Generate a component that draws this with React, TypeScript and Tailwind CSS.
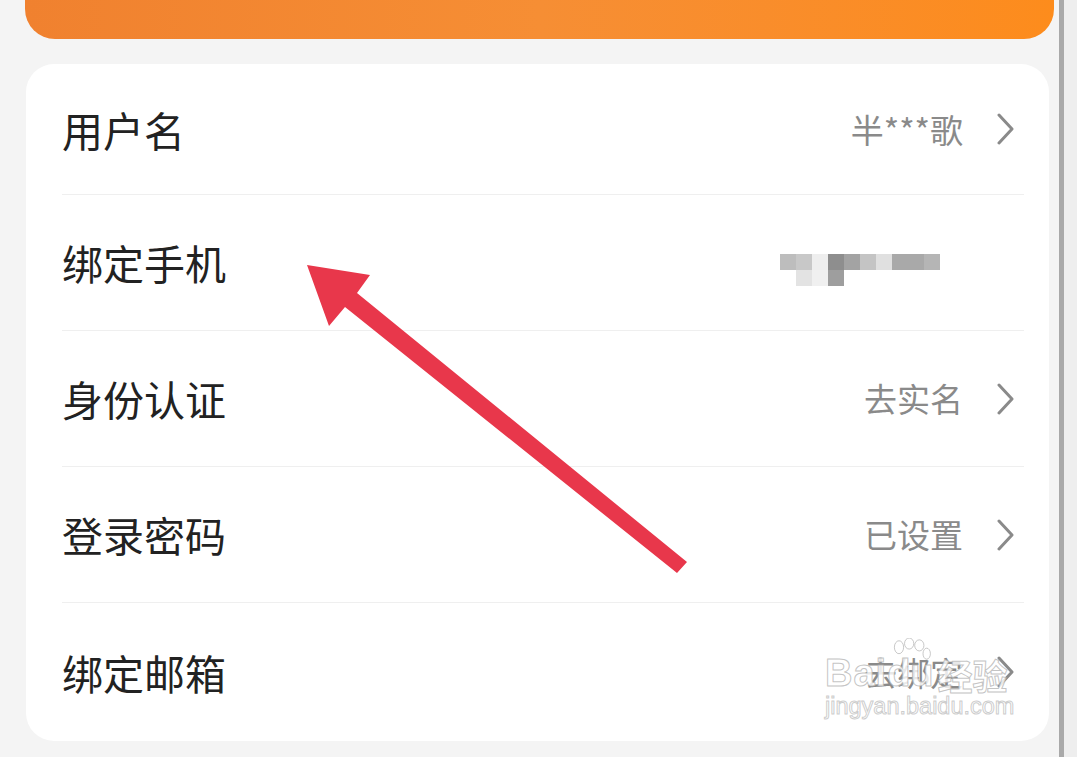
import React from 'react';

const font = { fontFamily: '"Noto Sans CJK SC", "Noto Sans", sans-serif' };

const rows = [
  { label: '用户名', value: '半***歌', h: 'h-[131px]' },
  { label: '绑定手机', value: null, h: 'h-[136px]' },
  { label: '身份认证', value: '去实名', h: 'h-[136px]' },
  { label: '登录密码', value: '已设置', h: 'h-[136px]' },
  { label: '绑定邮箱', value: '去绑定', h: 'h-[138px]' },
];

// mosaic blocks covering the phone number
const mosaic = [
  ['#bdbdbd', '#c8c8c8', '#eeeeee', '#8e8e8e', '#a3a3a3', '#c4c4c4', '#e0e0e0', '#a9a9a9', '#a9a9a9', '#b5b5b5'],
  ['#ffffff', '#e3e3e3', '#f0f0f0', '#9e9e9e', '#ffffff', '#ffffff', '#ffffff', '#ffffff', '#ffffff', '#ffffff'],
];

function Chevron() {
  return (
    <svg width="18" height="32" viewBox="0 0 18 32" className="shrink-0">
      <polyline points="2,2 15,16 2,30" fill="none" stroke="#8a8a8a" strokeWidth="3" strokeLinecap="round" strokeLinejoin="round" />
    </svg>
  );
}

function PhoneMosaic() {
  return (
    <div className="mr-[84px] mt-[14px] flex flex-col">
      {mosaic.map((line, i) => (
        <div key={i} className="flex">
          {line.map((c, j) => (
            <div key={j} className="h-4 w-4" style={{ backgroundColor: c }} />
          ))}
        </div>
      ))}
    </div>
  );
}

function Watermark() {
  return (
    <div className="pointer-events-none absolute left-[825px] top-[654px] flex flex-col items-start" style={{ fontFamily: '"Liberation Sans", "Noto Sans CJK SC", sans-serif' }}>
      <div className="relative flex items-end leading-none">
        <span className="text-[38px] font-bold tracking-[1px] text-white/80 [-webkit-text-stroke:1px_rgba(170,170,170,0.7)]">Bai</span>
        <span className="relative">
          <svg width="48" height="48" viewBox="0 0 52 52" className="absolute -top-[16px] left-0">
            <g fill="rgba(255,255,255,0.8)" stroke="rgba(170,170,170,0.7)" strokeWidth="1">
              <ellipse cx="13" cy="10" rx="5" ry="7" />
              <ellipse cx="24" cy="6" rx="5" ry="6" />
              <ellipse cx="35" cy="8" rx="5" ry="6" />
              <ellipse cx="43" cy="17" rx="4" ry="6" />
            </g>
          </svg>
          <span className="relative text-[38px] font-bold text-white/80 [-webkit-text-stroke:1px_rgba(170,170,170,0.7)]">du</span>
        </span>
        <span className="ml-[4px] text-[35px] font-bold text-white/80 [-webkit-text-stroke:1px_rgba(170,170,170,0.7)]" style={font}>经验</span>
      </div>
      <div className="mt-[3px] text-[23.5px] leading-none text-white/80 [-webkit-text-stroke:1px_rgba(170,170,170,0.6)]">jingyan.baidu.com</div>
    </div>
  );
}

export default function App() {
  return (
    <div className="relative flex h-[757px] w-[1077px] overflow-hidden bg-[#f4f4f4]" style={font}>
      <div className="flex w-[1059px] flex-col pl-[25px] pr-[5px]">
        {/* Orange header, top cut off */}
        <div className="h-[39px] shrink-0 rounded-b-[30px] bg-linear-to-r from-[#f0812f] via-[#f68e34] to-[#fd8c1c]" />

        {/* Settings card */}
        <div className="mt-[25px] mr-[5px] ml-[1px] flex flex-col rounded-[28px] bg-white pl-[36px] pr-[25px]">
          {rows.map((row, i) => (
            <div
              key={row.label}
              className={`flex items-center justify-between ${row.h} ${i < rows.length - 1 ? 'border-b border-[#efefef]' : ''}`}
            >
              <span className="text-[41px] leading-none text-[#222222]">{row.label}</span>
              {row.value ? (
                <div className="flex items-center gap-[34px] pr-[9px]">
                  <span className="text-[33px] leading-none text-[#8a8a8a]">{row.value}</span>
                  <Chevron />
                </div>
              ) : (
                <PhoneMosaic />
              )}
            </div>
          ))}
        </div>
      </div>

      {/* Device edge */}
      <div className="w-[5px] shrink-0 bg-[#a9a9a9]" />
      <div className="flex-1 bg-[#eeeeee]" />

      {/* Red annotation arrow */}
      <svg className="pointer-events-none absolute inset-0" width="1077" height="757" viewBox="0 0 1077 757">
        <polygon
          points="307,265 370,275 357,293 687,562 677,573 345,307 329,326"
          fill="#e8374b"
        />
      </svg>

      <Watermark />
    </div>
  );
}
